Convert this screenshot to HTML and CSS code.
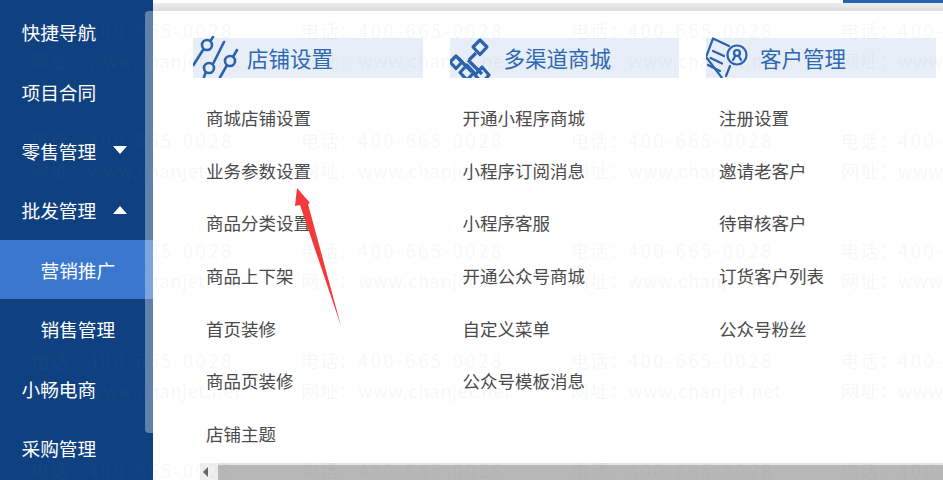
FILE: index.html
```html
<!DOCTYPE html>
<html lang="zh-CN">

<head>
  <meta charset="UTF-8">
  <meta name="viewport" content="width=device-width, initial-scale=1.0">
  <title>店铺设置</title>
  <link rel="stylesheet" href="styles.css">
</head>

<body>
  <div class="page">
    <nav class="sidebar">
      <div class="side-item">快捷导航</div>
      <div class="side-item">项目合同</div>
      <div class="side-item">零售管理<i class="caret caret-down"></i></div>
      <div class="side-item">批发管理<i class="caret caret-up"></i></div>
      <div class="side-item sub active">营销推广</div>
      <div class="side-item sub">销售管理</div>
      <div class="side-item">小畅电商</div>
      <div class="side-item">采购管理</div>
      <div class="side-scroll"></div>
    </nav>

    <main class="main">
      <div class="topbar"><div class="top-white"><span class="top-tab"></span></div></div>

      <div class="columns">
        <section class="col">
          <h2 class="col-title">
            <svg class="col-icon" viewBox="193 36 46 42">
              <g fill="none" stroke="#2a62ad" stroke-width="2.6" stroke-linecap="round">
                <path d="M193.500 65 L203 50 M211 40 L213 37" />
                <circle cx="207" cy="45" r="5" />
                <path d="M224 42 L213.500 63 M205.500 73 L204 77" />
                <circle cx="209" cy="68" r="5" />
                <path d="M237 50 L233.500 56 M226.500 66 L220 77.500" />
                <circle cx="230" cy="61" r="5" />
              </g>
            </svg>
            <span>店铺设置</span>
          </h2>
          <ul class="links">
            <li>商城店铺设置</li>
            <li>业务参数设置</li>
            <li>商品分类设置</li>
            <li>商品上下架</li>
            <li>首页装修</li>
            <li>商品页装修</li>
            <li>店铺主题</li>
          </ul>
        </section>

        <section class="col">
          <h2 class="col-title">
            <svg class="col-icon" viewBox="450 36 46 42">
              <g fill="none" stroke="#2a62ad" stroke-width="3.200" stroke-linejoin="round">
                <path d="M480 40 L487 47 L480 54.500 L473 47 Z" />
                <path d="M476 53 L469 60 M458 58 L472 72 M468 60 L482 74" />
                <path d="M456 56 L462 62 L456 68.500 L450 62 Z" />
                <path d="M467 65 L474 72.500 L467 80 L460 72.500 Z" />
                <path d="M482 67 L489 75 L482 83 L475 75 Z" />
              </g>
            </svg>
            <span>多渠道商城</span>
          </h2>
          <ul class="links">
            <li>开通小程序商城</li>
            <li>小程序订阅消息</li>
            <li>小程序客服</li>
            <li>开通公众号商城</li>
            <li>自定义菜单</li>
            <li>公众号模板消息</li>
          </ul>
        </section>

        <section class="col">
          <h2 class="col-title">
            <svg class="col-icon" viewBox="706 36 46 42">
              <g fill="none" stroke="#2a62ad" stroke-width="2.200" stroke-linecap="round" stroke-linejoin="round">
                <path d="M729 46 L713 38.500 L706 57 L722 78" />
                <path d="M713 51 L724 56 M710.500 58 L722 63.500 M708 65 L720 71 M730 66 L726 76" />
                <circle cx="737" cy="55" r="9.500" />
                <circle cx="737" cy="53" r="3" />
                <path d="M733 60 L735.500 55.500 M741 60 L738.500 55.500" />
              </g>
            </svg>
            <span>客户管理</span>
          </h2>
          <ul class="links">
            <li>注册设置</li>
            <li>邀请老客户</li>
            <li>待审核客户</li>
            <li>订货客户列表</li>
            <li>公众号粉丝</li>
          </ul>
        </section>
      </div>

      <div class="hscroll">
        <div class="hscroll-btn"><i class="caret-left"></i></div>
        <div class="hscroll-thumb"></div>
      </div>
    </main>
  </div>

  <!-- red annotation arrow drawn on the screenshot -->
  <svg class="annot" viewBox="0 0 943 480">
    <polygon points="297,188 310,203 308,204 341,326 300,205 295,206" fill="#f4393a" />
  </svg>

  <div class="watermark">
    <div class="wm"><p class="tel"><span>电话：</span>400-665-0028</p><p class="web"><span>网址：</span>www.chanjet.net</p></div>
    <div class="wm"><p class="tel"><span>电话：</span>400-665-0028</p><p class="web"><span>网址：</span>www.chanjet.net</p></div>
    <div class="wm"><p class="tel"><span>电话：</span>400-665-0028</p><p class="web"><span>网址：</span>www.chanjet.net</p></div>
    <div class="wm"><p class="tel"><span>电话：</span>400-665-0028</p><p class="web"><span>网址：</span>www.chanjet.net</p></div>
    <div class="wm"><p class="tel"><span>电话：</span>400-665-0028</p><p class="web"><span>网址：</span>www.chanjet.net</p></div>
    <div class="wm"><p class="tel"><span>电话：</span>400-665-0028</p><p class="web"><span>网址：</span>www.chanjet.net</p></div>
    <div class="wm"><p class="tel"><span>电话：</span>400-665-0028</p><p class="web"><span>网址：</span>www.chanjet.net</p></div>
    <div class="wm"><p class="tel"><span>电话：</span>400-665-0028</p><p class="web"><span>网址：</span>www.chanjet.net</p></div>
    <div class="wm"><p class="tel"><span>电话：</span>400-665-0028</p><p class="web"><span>网址：</span>www.chanjet.net</p></div>
    <div class="wm"><p class="tel"><span>电话：</span>400-665-0028</p><p class="web"><span>网址：</span>www.chanjet.net</p></div>
    <div class="wm"><p class="tel"><span>电话：</span>400-665-0028</p><p class="web"><span>网址：</span>www.chanjet.net</p></div>
    <div class="wm"><p class="tel"><span>电话：</span>400-665-0028</p><p class="web"><span>网址：</span>www.chanjet.net</p></div>
    <div class="wm"><p class="tel"><span>电话：</span>400-665-0028</p><p class="web"><span>网址：</span>www.chanjet.net</p></div>
    <div class="wm"><p class="tel"><span>电话：</span>400-665-0028</p><p class="web"><span>网址：</span>www.chanjet.net</p></div>
    <div class="wm"><p class="tel"><span>电话：</span>400-665-0028</p><p class="web"><span>网址：</span>www.chanjet.net</p></div>
    <div class="wm"><p class="tel"><span>电话：</span>400-665-0028</p><p class="web"><span>网址：</span>www.chanjet.net</p></div>
    <div class="wm"><p class="tel"><span>电话：</span>400-665-0028</p><p class="web"><span>网址：</span>www.chanjet.net</p></div>
    <div class="wm"><p class="tel"><span>电话：</span>400-665-0028</p><p class="web"><span>网址：</span>www.chanjet.net</p></div>
    <div class="wm"><p class="tel"><span>电话：</span>400-665-0028</p><p class="web"><span>网址：</span>www.chanjet.net</p></div>
    <div class="wm"><p class="tel"><span>电话：</span>400-665-0028</p><p class="web"><span>网址：</span>www.chanjet.net</p></div>
  </div>
</body>

</html>
```

FILE: styles.css
```css
html,
body {
  margin: 0;
  height: 480px;
  overflow: hidden;
  background-color: #fff;
  font-family: "Noto Sans CJK SC", "Liberation Sans", sans-serif;
}

.page {
  display: flex;
  height: 480px;
}

.sidebar {
  position: relative;
  flex: 0 0 153px;
  padding-top: 2px;
  box-sizing: border-box;
  background-color: #0f4181;
  color: #fff;
}

.side-item {
  display: flex;
  align-items: center;
  height: 59.4px;
  padding-left: 21.5px;
  font-size: 18.7px;
}

.side-item.sub {
  padding-left: 40.5px;
}

.side-item.active {
  background-color: #3a78cf;
}

.caret {
  width: 0;
  height: 0;
  margin-left: 17px;
  border-left: 7px solid transparent;
  border-right: 7px solid transparent;
}

.caret-down {
  border-top: 8px solid #fff;
}

.caret-up {
  border-bottom: 8px solid #fff;
}

.side-scroll {
  position: absolute;
  top: 11px;
  right: 0;
  width: 8px;
  height: 422px;
  border-radius: 4px 0 0 4px;
  background-color: rgba(255, 255, 255, 0.34);
}

.main {
  flex: 1;
  display: flex;
  flex-direction: column;
  min-width: 0;
}

.topbar {
  height: 11px;
  background: linear-gradient(#f3f3f3, #dcdcdc);
}

.top-white {
  display: flex;
  justify-content: flex-end;
  height: 3px;
  background-color: #fff;
}

.top-tab {
  width: 100px;
  background-color: #2a62ad;
}

.columns {
  flex: 1;
  display: flex;
  gap: 27px;
  padding: 27px 0 0 40px;
}

.col {
  flex: 0 0 229.500px;
}

.col-title {
  display: flex;
  align-items: center;
  height: 40px;
  margin: 0;
  background-color: #e8eef7;
  color: #2d68b3;
  font-size: 21.500px;
  font-weight: normal;
}

.col-title span {
  padding-bottom: 2px;
}

.col-icon {
  flex: 0 0 46px;
  width: 46px;
  height: 42px;
  margin: -2px 8px 0 0;
}

.links {
  list-style: none;
  margin: 13px 0 0;
  padding: 0 0 0 13px;
  color: #4a4a4a;
  font-size: 17.500px;
}

.links li {
  display: flex;
  align-items: center;
  height: 52.700px;
}

.hscroll {
  display: flex;
  height: 17px;
  padding-left: 47px;
}

.hscroll-btn {
  display: flex;
  align-items: center;
  width: 18px;
  padding-left: 3px;
  box-sizing: border-box;
  background-color: #efefef;
}

.caret-left {
  width: 0;
  height: 0;
  border-top: 5px solid transparent;
  border-bottom: 5px solid transparent;
  border-right: 5px solid #666;
}

.hscroll-thumb {
  flex: 1;
  border-top: 2px solid #e2e2e2;
  background-color: #b7b7b7;
}

.annot {
  position: absolute;
  top: 0;
  left: 0;
  width: 943px;
  height: 480px;
  pointer-events: none;
}

.watermark {
  position: absolute;
  top: 19px;
  left: 31px;
  display: grid;
  grid-template-columns: repeat(4, 270px);
  grid-auto-rows: 110px;
  width: 912px;
  height: 461px;
  overflow: hidden;
  pointer-events: none;
  color: rgba(120, 128, 145, 0.07);
  font-size: 18px;
}

.wm p {
  margin: 0;
  height: 30px;
  line-height: 22px;
  white-space: nowrap;
}

.wm span {
  letter-spacing: 1px;
}

.wm .tel {
  letter-spacing: 2.8px;
}

.wm .web {
  letter-spacing: 0.7px;
}
```
